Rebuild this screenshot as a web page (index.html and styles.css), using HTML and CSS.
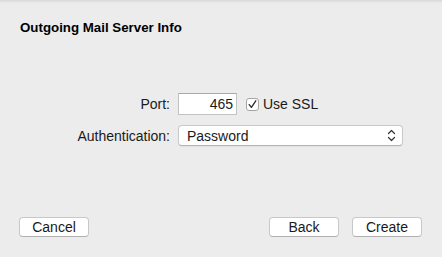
FILE: index.html
```html
<html>
  <head>
    <link rel="stylesheet" href="styles.css">
  </head>
  <body>
    <div class="sheet">
      <div class="title">Outgoing Mail Server Info</div>

      <div class="form">
        <label class="label">Port:</label>
        <div class="row">
          <div class="field">465</div>
          <div class="check">
            <span class="box">
              <svg width="11" height="11" viewBox="0 0 11 11">
                <path d="M2.2 5.6 L4.4 8.4 L8.8 1.8" fill="none" stroke="#2a2a2a" stroke-width="1.3" stroke-linecap="round" stroke-linejoin="round"/>
              </svg>
            </span>
            <span>Use SSL</span>
          </div>
        </div>

        <label class="label">Authentication:</label>
        <div class="popup">
          <span>Password</span>
          <svg width="9" height="13" viewBox="0 0 9 13">
            <path d="M1.5 4.5 L4.5 1.5 L7.5 4.5 M1.5 8.5 L4.5 11.5 L7.5 8.5" fill="none" stroke="#333" stroke-width="1.2" stroke-linecap="round" stroke-linejoin="round"/>
          </svg>
        </div>
      </div>

      <div class="footer">
        <button class="button">Cancel</button>
        <div class="spacer"></div>
        <button class="button">Back</button>
        <button class="button">Create</button>
      </div>
    </div>
  </body>
</html>
```

FILE: styles.css
```css
      body {
        margin: 0;
        background-color: #ececec;
        font-family: 'Liberation Sans', Arial, sans-serif;
        font-size: 14px;
        color: #1a1a1a;
      }
      .sheet {
        height: 257px;
        display: flex;
        flex-direction: column;
        background: linear-gradient(#d6d6d6 0, #e6e6e6 2px, #ececec 4px, #ececec 100%);
      }
      .title {
        font-size: 13.3px;
        font-weight: bold;
        line-height: 16px;
        padding: 20px 0 0 20px;
        color: #000;
      }
      .form {
        display: grid;
        grid-template-columns: 170px auto;
        column-gap: 8px;
        row-gap: 10px;
        margin-top: 57px;
        align-items: center;
      }
      .label {
        text-align: right;
        color: #1a1a1a;
      }
      .row {
        display: flex;
        align-items: center;
      }
      .field {
        box-sizing: border-box;
        width: 59px;
        height: 22px;
        line-height: 21px;
        padding: 0 3px;
        text-align: right;
        background: white;
        border: 1px solid #c2c2c2;
        border-top-color: #a8a8a8;
      }
      .check {
        display: flex;
        align-items: center;
        margin-left: 9px;
      }
      .box {
        box-sizing: border-box;
        width: 13px;
        height: 13px;
        background: white;
        border: 1px solid #a6a6a6;
        border-radius: 3px;
        display: flex;
        align-items: center;
        justify-content: center;
        margin-right: 4px;
      }
      .popup {
        box-sizing: border-box;
        width: 225px;
        height: 21px;
        display: flex;
        align-items: center;
        justify-content: space-between;
        padding: 0 6px 0 8px;
        background: white;
        border: 1px solid #c8c8c8;
        border-bottom-color: #b4b4b4;
        border-radius: 4px;
        box-shadow: 0 1px 0 rgba(0, 0, 0, 0.04);
      }
      .footer {
        display: flex;
        margin-top: auto;
        padding: 0 20px 20px 19px;
        gap: 13px;
      }
      .spacer {
        flex: 1;
      }
      .button {
        box-sizing: border-box;
        width: 70px;
        height: 20px;
        padding: 0;
        font-family: 'Liberation Sans', Arial, sans-serif;
        font-size: 14px;
        color: #1a1a1a;
        background: white;
        border: 1px solid #c8c8c8;
        border-bottom-color: #b0b0b0;
        border-radius: 4px;
      }
```
